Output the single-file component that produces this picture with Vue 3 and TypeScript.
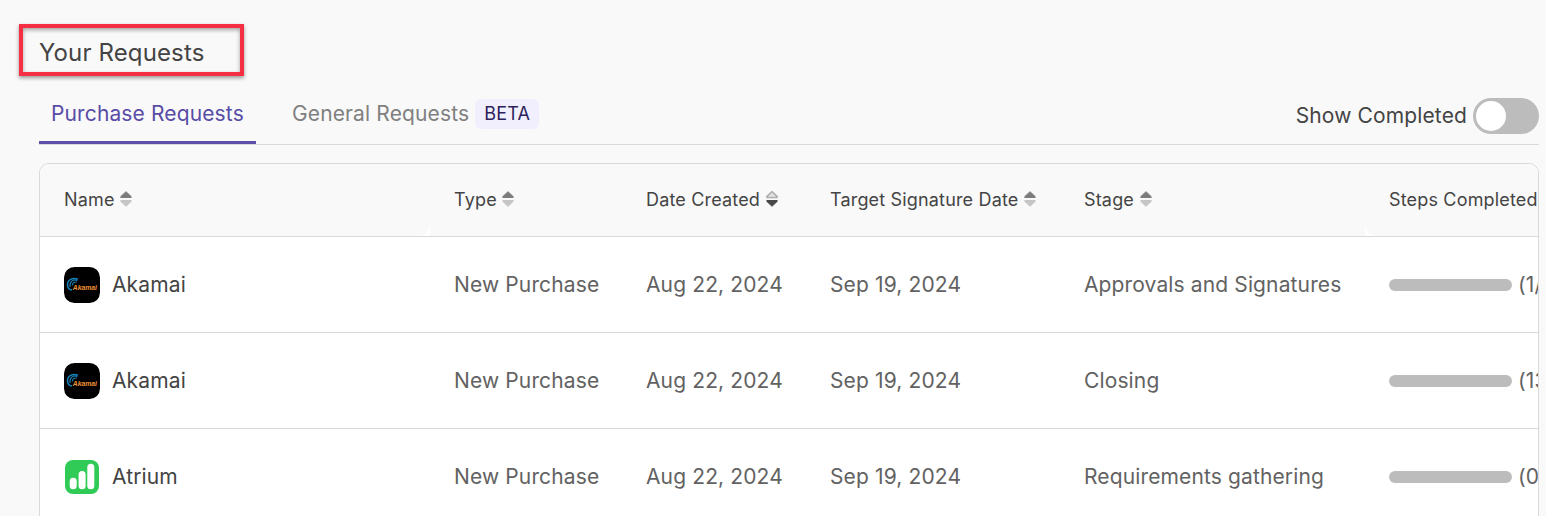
<script setup lang="ts">
interface Column {
  label: string
  sort?: 'none' | 'desc'
}
interface RequestRow {
  id: number
  logo: 'akamai' | 'atrium'
  name: string
  type: string
  created: string
  target: string
  stage: string
  steps: string
}

const columns: Column[] = [
  { label: 'Name', sort: 'none' },
  { label: 'Type', sort: 'none' },
  { label: 'Date Created', sort: 'desc' },
  { label: 'Target Signature Date', sort: 'none' },
  { label: 'Stage', sort: 'none' },
  { label: 'Steps Completed' },
]

const rows: RequestRow[] = [
  { id: 1, logo: 'akamai', name: 'Akamai', type: 'New Purchase', created: 'Aug 22, 2024', target: 'Sep 19, 2024', stage: 'Approvals and Signatures', steps: '(1/13)' },
  { id: 2, logo: 'akamai', name: 'Akamai', type: 'New Purchase', created: 'Aug 22, 2024', target: 'Sep 19, 2024', stage: 'Closing', steps: '(13/13)' },
  { id: 3, logo: 'atrium', name: 'Atrium', type: 'New Purchase', created: 'Aug 22, 2024', target: 'Sep 19, 2024', stage: 'Requirements gathering', steps: '(0/13)' },
]
</script>

<template>
  <main class="page">
    <h1 class="title">Your Requests</h1>
    <nav class="tabs">
      <div class="tab active"><span>Purchase Requests</span></div>
      <div class="tab general"><span>General Requests</span><span class="beta">BETA</span></div>
      <div class="toggle">
        <span class="toggle-label">Show Completed</span>
        <span class="switch"><span class="knob"></span></span>
      </div>
    </nav>

    <section class="table">
      <div class="row head">
        <div v-for="c in columns" :key="c.label" class="cell">
          <span>{{ c.label }}</span>
          <svg v-if="c.sort" class="sort" :class="c.sort" width="12" height="16" viewBox="0 0 12 16">
            <path class="up" d="M6 .7 11.200 5.600V6.500H.8V5.600Z" />
            <path class="down" d="M6 15.300 11.200 10.400V9.500H.8V10.400Z" />
          </svg>
        </div>
      </div>
      <div v-for="r in rows" :key="r.id" class="row">
        <div class="cell name">
          <svg v-if="r.logo === 'akamai'" class="logo" width="36" height="36" viewBox="0 0 36 36">
            <rect width="36" height="36" rx="10.500" fill="#000" />
            <path d="M13.800 12.300C8.500 9.800 3.300 13 3.500 18c.1 2.700 2 4.700 4.500 5.100" fill="none" stroke="#1683bd" stroke-width="1.500" />
            <path d="M13.500 13.400C8.500 12 5.200 15 6 20M12.800 15c-2.900-.3-4.600 1.300-4.600 3.600" fill="none" stroke="#2387be" stroke-width="1.100" />
            <text x="8.800" y="22.600" textLength="24.200" lengthAdjust="spacingAndGlyphs" class="wordmark">Akamai</text>
          </svg>
          <svg v-else class="logo" width="36" height="36" viewBox="0 0 36 36">
            <rect x="1" y="1" width="34" height="34" rx="8" fill="#30cb56" />
            <rect x="5.700" y="18.700" width="7" height="11.500" rx="3.500" fill="#fff" />
            <rect x="14.600" y="12" width="7" height="18.200" rx="3.500" fill="#fff" />
            <rect x="23.300" y="4.700" width="7" height="25.500" rx="3.500" fill="#fff" />
          </svg>
          <span>{{ r.name }}</span>
        </div>
        <div class="cell">{{ r.type }}</div>
        <div class="cell">{{ r.created }}</div>
        <div class="cell">{{ r.target }}</div>
        <div class="cell">{{ r.stage }}</div>
        <div class="cell"><span class="bar"></span><span>{{ r.steps }}</span></div>
      </div>
    </section>
  </main>
</template>

<style>
body {
  background: #f9f9f9;
  overflow: hidden;
}
</style>

<style scoped>
.page {
  box-sizing: border-box;
  height: 516px;
  overflow: hidden;
  padding: 24px 7px 0 19px;
  font-family: Inter, "Liberation Sans", sans-serif;
  font-size: 21px;
  letter-spacing: 0.13px;
  color: #444;
}
.title {
  box-sizing: border-box;
  width: 225px;
  height: 52px;
  margin: 0;
  padding: 1px 0 0 16px;
  border: 4px solid #f52e44;
  font-size: 24px;
  font-weight: 400;
  line-height: 48px;
  white-space: nowrap;
  box-shadow: 0 2px 4px rgba(0, 0, 0, 0.4), inset 0 2px 4px rgba(0, 0, 0, 0.35);
}
.tabs {
  box-sizing: border-box;
  display: flex;
  height: 69px;
  margin-left: 20px;
  padding-top: 8px;
  border-bottom: 1px solid #d9d9d9;
}
.tab {
  box-sizing: border-box;
  display: flex;
  align-items: center;
  height: 60px;
  padding: 0 12px;
  white-space: nowrap;
}
.tab span:first-child {
  padding-bottom: 1px;
}
.active {
  width: 217px;
  border-bottom: 3px solid #5c50a8;
  padding-top: 2px;
  color: #584ca6;
}
.general {
  margin-left: 24px;
  color: #808080;
}
.beta {
  width: 64px;
  height: 30px;
  margin-left: 6px;
  border-radius: 6px;
  background: #f1effe;
  color: #2c1f5c;
  font-size: 18px;
  line-height: 30px;
  text-align: center;
}
.toggle {
  display: flex;
  align-items: center;
  gap: 6px;
  height: 64px;
  margin-left: auto;
}
.toggle-label {
  padding-bottom: 2px;
}
.switch {
  box-sizing: border-box;
  width: 66px;
  height: 36px;
  padding: 3px;
  border-radius: 18px;
  background: #bcbcbc;
}
.knob {
  display: block;
  width: 30px;
  height: 30px;
  border-radius: 50%;
  background: #fff;
}
.table {
  box-sizing: border-box;
  height: 380px;
  margin: 18px 0 0 20px;
  border: 1px solid #d9d9d9;
  border-radius: 10px 10px 0 0;
  background: #fff;
  overflow: hidden;
}
.row {
  box-sizing: border-box;
  display: grid;
  grid-template-columns: 390px 192px 184px 254px 305px 240px;
  height: 96px;
  border-bottom: 1px solid #d9d9d9;
}
.cell {
  display: flex;
  align-items: center;
  padding-left: 24px;
  color: #626262;
  white-space: nowrap;
}
.head {
  height: 73px;
}
.head .cell {
  gap: 5.5px;
  padding-bottom: 2px;
  background: #f9f9f9;
  color: #444;
  font-size: 18px;
  letter-spacing: 0.17px;
}
.head .cell:first-child {
  border-bottom-right-radius: 12px;
}
.head .cell:last-child {
  border-bottom-left-radius: 12px;
}
.cell.name {
  gap: 12px;
  color: #444;
}
.sort path {
  stroke-width: 1;
  stroke-linejoin: round;
}
.up {
  fill: #7c7c7c;
  stroke: #7c7c7c;
}
.down {
  fill: #c5c5c5;
  stroke: #c5c5c5;
}
.desc .up {
  fill: #e4e4e4;
  stroke: #b0b0b0;
}
.sort.desc .up {
  stroke-width: 1.6;
}
.desc .down {
  fill: #484848;
  stroke: #484848;
}
.logo {
  flex: none;
}
.wordmark {
  fill: #f09235;
  font: italic bold 8px "Liberation Sans", sans-serif;
  letter-spacing: 0;
}
.bar {
  flex: none;
  width: 123px;
  height: 12px;
  margin-right: 6px;
  border-radius: 6px;
  background: #bcbcbc;
}
</style>
